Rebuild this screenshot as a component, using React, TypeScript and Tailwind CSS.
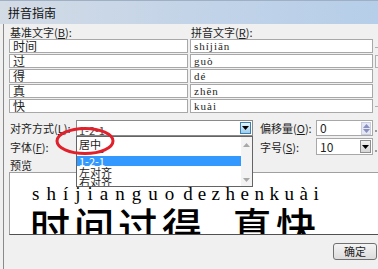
import React from "react";

const Lbl = ({ t, k }: { t: string; k: string }) => (
  <span className="whitespace-nowrap">
    {t}(<span className="underline">{k}</span>):
  </span>
);

const Tri = ({ up = false, color = "#000" }: { up?: boolean; color?: string }) => (
  <svg width="7" height="4" viewBox="0 0 7 4">
    <path d={up ? "M0 4 L3.5 0 L7 4 Z" : "M0 0 L7 0 L3.5 4 Z"} fill={color} />
  </svg>
);

export default function App() {
  const rows: [string, string][] = [
    ["时间", "shíjiān"],
    ["过", "guò"],
    ["得", "dé"],
    ["真", "zhēn"],
    ["快", "kuài"],
  ];
  return (
    <div className="relative w-[378px] h-[269px] overflow-hidden bg-[#f0f0f0] text-[#1e1e1e] font-['Noto_Sans_CJK_SC','Noto_Sans',sans-serif]">
      {/* title bar */}
      <div className="h-[24px] border-t border-[#9fb0c4] bg-linear-to-r from-[#d3dbe5] via-[#c3d4e8] to-[#b6cee9] flex items-center pl-[8px] text-[12px] leading-[12px] text-[#101010]">
        拼音指南
      </div>

      <div className="ml-[3px] border-l border-[#8a8a8a] pl-[5px] h-[245px] flex flex-col text-[11px] leading-[12px]">
        {/* column labels */}
        <div className="mt-[2px] h-[12px] grid grid-cols-[179px_183px] gap-x-[2px]">
          <div className="pl-[1px]">
            <Lbl t="基准文字" k="B" />
          </div>
          <div className="pl-[1px]">
            <Lbl t="拼音文字" k="R" />
          </div>
        </div>

        {/* rows */}
        <div className="mt-[1px] flex flex-col gap-[1px]">
          {rows.map(([a, b]) => (
            <div key={a} className="grid grid-cols-[179px_183px] gap-x-[2px] h-[14px]">
              <div className="border border-[#a8a8a8] bg-white pl-[3px] flex items-center text-[12px] leading-[12px]">
                {a}
              </div>
              <div className="border border-[#a8a8a8] bg-white pl-[3px] flex items-center text-[11px] leading-[11px] tracking-[1px] font-['Liberation_Serif',serif]">
                {b}
              </div>
            </div>
          ))}
        </div>

        {/* controls row 1 */}
        <div className="mt-[7px] h-[16px] flex items-center">
          <div className="w-[67px] pl-[1px]">
            <Lbl t="对齐方式" k="L" />
          </div>
          <div className="relative w-[177px] h-[16px] border border-[#8a8a8a] bg-white flex items-center">
            <div className="flex-1 h-full overflow-hidden pl-[2px] text-[11px] leading-[11px] pt-[4px] text-[#444]">
              1-2-1
            </div>
            <div className="w-[11px] h-[12px] mr-[1px] border border-[#3c7fb1] bg-linear-to-b from-[#e5f4fc] to-[#9dcdee] flex items-center justify-center">
              <Tri />
            </div>
            {/* open list */}
            <div className="absolute left-[-1px] top-[15px] w-[177px] h-[51px] border border-[#646464] bg-white flex overflow-hidden">
              <div className="flex-1 flex flex-col text-[11px] leading-[10px]">
                <div className="h-[2px] shrink-0" />
                <div className="h-[10px] shrink-0 pl-[2px]">居中</div>
                <div className="h-[4px] shrink-0 overflow-hidden pl-[2px] pt-[1px]">0-1-0</div>
                <div className="h-[3px] shrink-0" />
                <div className="h-[10px] shrink-0 pl-[2px] bg-[#3399ff] text-white">1-2-1</div>
                <div className="h-[11px] shrink-0 pl-[2px] pt-[1px]">左对齐</div>
                <div className="h-[10px] shrink-0 pl-[2px]">右对齐</div>
              </div>
              <div className="w-[11px] bg-[#f3f3f3] flex flex-col justify-between items-center pt-[6px] pb-[4px]">
                <Tri up color="#a8a8a8" />
                <Tri color="#a8a8a8" />
              </div>
            </div>
          </div>
          <div className="ml-[7px] w-[56px]">
            <Lbl t="偏移量" k="O" />
          </div>
          <div className="w-[57px] h-[16px] border border-[#a8a8a8] bg-white flex items-center">
            <div className="flex-1 pl-[3px] text-[12px] leading-[12px]">0</div>
            <div className="w-[10px] h-[13px] mr-[1px] bg-[#e4e8f2] border border-[#c8cde0] flex flex-col items-center justify-center gap-[1px]">
              <Tri up color="#8a8fc0" />
              <Tri color="#8a8fc0" />
            </div>
          </div>
        </div>

        {/* controls row 2 */}
        <div className="mt-[2px] h-[17px] flex items-center">
          <div className="w-[67px] pl-[1px]">
            <Lbl t="字体" k="F" />
          </div>
          <div className="w-[177px]" />
          <div className="ml-[7px] w-[56px]">
            <Lbl t="字号" k="S" />
          </div>
          <div className="w-[57px] h-[17px] border border-[#a8a8a8] bg-white flex items-center">
            <div className="flex-1 pl-[3px] text-[12px] leading-[12px]">10</div>
            <div className="w-[11px] h-[13px] mr-[1px] bg-linear-to-b from-[#f2f2f2] to-[#d6d6d6] border border-[#8f8f8f] flex items-center justify-center">
              <Tri />
            </div>
          </div>
        </div>

        {/* preview label */}
        <div className="h-[16px] pt-[4px] pl-[1px]">预览</div>

        {/* preview box */}
        <div className="mt-[1px] w-[380px] h-[63px] shrink-0 border border-[#a0a0a0] border-b-[#505050] bg-white overflow-hidden">
          <div className="pl-[22px] pt-[11px] h-[32px] text-[19px] leading-[19px] font-['Liberation_Serif',serif] text-black whitespace-nowrap">
            <span className="tracking-[7px]">shíjianguo</span>
            <span className="tracking-[5px] ml-[2px]">d</span>
            <span className="tracking-[5.5px]">ezhenkuài</span>
          </div>
          <div className="flex pl-[20px] text-[40px] leading-[40px] font-medium text-black whitespace-nowrap">
            <span>时</span>
            <span className="ml-[4px]">间</span>
            <span className="ml-[4px]">过</span>
            <span className="ml-[4px]">得</span>
            <span className="ml-[30px]">真</span>
            <span className="ml-[4px]">快</span>
          </div>
        </div>

        {/* buttons */}
        <div className="mt-[8px] flex justify-end pr-[1px]">
          <div className="w-[44px] h-[17px] rounded-[3px] border border-[#707070] bg-linear-to-b from-[#f4f4f4] to-[#dcdcdc] flex items-center justify-center text-[11px] leading-[11px]">
            确定
          </div>
        </div>
      </div>

      {/* right edge bits */}
      <div className="absolute left-[375px] top-[55px] w-[4px] h-[13px] border border-[#b0b0b0] bg-[#f4f4f4]" />
      <div className="absolute left-[375px] top-[47px] w-[3px] h-[1px] bg-[#b0b0b0]" />
      <div className="absolute left-[375px] top-[106px] w-[3px] h-[1px] bg-[#b0b0b0]" />
      <div className="absolute left-[375px] top-[130px] w-[2px] h-[2px] bg-[#9a9a9a]" />
      <div className="absolute left-[375px] top-[150px] w-[2px] h-[2px] bg-[#9a9a9a]" />

      {/* red annotation ellipse */}
      <svg className="absolute left-[55px] top-[127px] z-20" width="62" height="30" viewBox="0 0 62 30">
        <ellipse cx="30" cy="14" rx="28" ry="12.5" fill="none" stroke="#e0202a" strokeWidth="3" />
      </svg>
    </div>
  );
}
